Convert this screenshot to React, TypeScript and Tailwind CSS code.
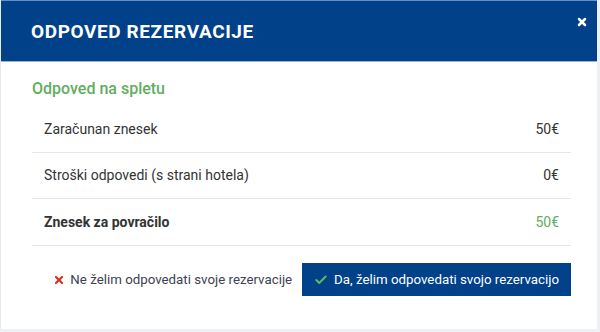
import { Check, X } from "lucide-react";

const rows = [
  { label: "Zaračunan znesek", value: "50€" },
  { label: "Stroški odpovedi (s strani hotela)", value: "0€" },
];

export default function App() {
  return (
    <div className="w-[600px] h-[332px] bg-[#eef0f3] font-['Roboto',sans-serif]">
      <div className="w-[597px] h-[329px] bg-white border-l border-[#e8eaee] flex flex-col">
        {/* Glava */}
        <div className="h-[62px] shrink-0 bg-[#004189] border-t border-[#6d8fc0] border-b border-b-[#9db4d8] flex items-center justify-between pl-[30px] pr-[9px]">
          <h2 className="text-white font-bold text-[19px] tracking-[0.6px] leading-none">ODPOVED REZERVACIJE</h2>
          <button className="text-white self-start mt-[15px]">
            <X className="h-[12px] w-[12px]" strokeWidth={5} />
          </button>
        </div>

        {/* Vsebina */}
        <div className="pl-[31px] pr-[26px] pt-[16px]">
          <h3 className="text-[#5fae5f] font-medium text-[16px] leading-[22px]">Odpoved na spletu</h3>
          <div className="mt-[7px]">
            {rows.map((r) => (
              <div key={r.label} className="h-[46px] border-b border-[#e6e6e6] flex items-center justify-between px-[12px] text-[14px] text-[#333]">
                <span>{r.label}</span>
                <span>{r.value}</span>
              </div>
            ))}
            <div className="h-[47px] border-b border-[#e6e6e6] flex items-center justify-between px-[12px] text-[14px]">
              <span className="font-bold text-[#333]">Znesek za povračilo</span>
              <span className="text-[#5fae5f]">50€</span>
            </div>
          </div>

          <div className="flex justify-end items-center mt-[17px] gap-[10px]">
            <button className="flex items-center gap-[5px] text-[13.3px] text-[#3d4252] whitespace-nowrap">
              <X className="h-[12px] w-[12px] text-[#d9332b]" strokeWidth={4.5} />
              Ne želim odpovedati svoje rezervacije
            </button>
            <button className="h-[33px] bg-[#004189] text-white text-[13.3px] flex items-center gap-[6px] px-[12px] whitespace-nowrap">
              <Check className="h-[14px] w-[14px] text-[#5cb85c]" strokeWidth={3.5} />
              Da, želim odpovedati svojo rezervacijo
            </button>
          </div>
        </div>
      </div>
    </div>
  );
}
